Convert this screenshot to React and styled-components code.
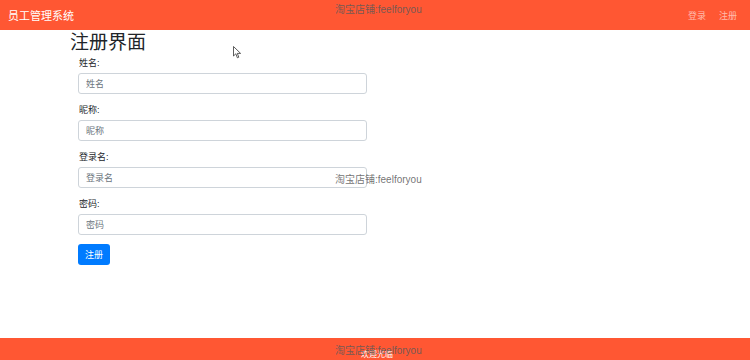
import React from "react";
import styled, { createGlobalStyle } from "styled-components";

const Global = createGlobalStyle`
  html, body { margin: 0; padding: 0; background: #fff; }
  body {
    font-family: "Liberation Sans", "Noto Sans CJK SC", sans-serif;
    color: #212529;
  }
`;

const Page = styled.div`
  position: relative;
  width: 750px;
  height: 360px;
  display: flex;
  flex-direction: column;
  overflow: hidden;
`;

const NavBar = styled.div`
  height: 30px;
  background: #ff5733;
  display: flex;
  align-items: center;
  justify-content: space-between;
  padding: 0 13px 0 8px;
  flex-shrink: 0;
`;

const Brand = styled.div`
  color: #fff;
  font-size: 11px;
`;

const NavLinks = styled.div`
  display: flex;
  gap: 13px;
`;

const NavLink = styled.a`
  color: rgba(255, 255, 255, 0.6);
  font-size: 9px;
`;

const Main = styled.div`
  flex: 1;
  padding: 1px 0 0 70px;
`;

const Title = styled.h2`
  font-size: 19px;
  font-weight: 400;
  margin: 1px 0 3px;
  line-height: 22px;
`;

const Form = styled.form`
  width: 289px;
  padding-left: 8px;
  display: flex;
  flex-direction: column;
`;

const Field = styled.div`
  display: flex;
  flex-direction: column;
  margin-bottom: 10px;
`;

const Label = styled.label`
  font-size: 9px;
  line-height: 12px;
  margin: 0 0 4px 1px;
`;

const Input = styled.input`
  box-sizing: border-box;
  height: 21px;
  border: 1px solid #ced4da;
  border-radius: 3px;
  padding: 0 7px;
  font-size: 9px;
  font-family: inherit;
  &::placeholder { color: #6c757d; }
`;

const Button = styled.button`
  align-self: flex-start;
  width: 32px;
  height: 21px;
  background: #007bff;
  border: none;
  border-radius: 3px;
  color: #fff;
  font-size: 9px;
  font-family: inherit;
  padding: 0;
  margin-top: -1px;
`;

const Footer = styled.div`
  height: 22px;
  background: #ff5733;
  display: flex;
  justify-content: center;
  align-items: flex-end;
  flex-shrink: 0;
`;

const FooterText = styled.div`
  color: #fff;
  font-size: 8px;
  line-height: 10px;
  margin-left: 4px;
`;

const Watermark = styled.div`
  position: absolute;
  left: ${(p) => p.x}px;
  top: ${(p) => p.y}px;
  font-size: 10px;
  color: rgba(90, 90, 90, 0.85);
  white-space: nowrap;
  pointer-events: none;
`;

const Cursor = styled.svg`
  position: absolute;
  left: 233px;
  top: 46px;
`;

export default function App() {
  const fields = [
    ["姓名", "text"],
    ["昵称", "text"],
    ["登录名", "text"],
    ["密码", "password"],
  ];
  return (
    <Page>
      <Global />
      <NavBar>
        <Brand>员工管理系统</Brand>
        <NavLinks>
          <NavLink>登录</NavLink>
          <NavLink>注册</NavLink>
        </NavLinks>
      </NavBar>
      <Main>
        <Title>注册界面</Title>
        <Form>
          {fields.map(([name, type]) => (
            <Field key={name}>
              <Label>{name}:</Label>
              <Input type={type} placeholder={name} />
            </Field>
          ))}
          <Button type="button">注册</Button>
        </Form>
      </Main>
      <Footer>
        <FooterText>欢迎光临</FooterText>
      </Footer>
      <Watermark x={335} y={1}>淘宝店铺:feelforyou</Watermark>
      <Watermark x={335} y={171}>淘宝店铺:feelforyou</Watermark>
      <Watermark x={335} y={342}>淘宝店铺:feelforyou</Watermark>
      <Cursor width="9" height="13" viewBox="0 0 9 13">
        <path d="M0.5 0.5 L0.5 10 L2.8 7.8 L4.4 11.8 L5.8 11.2 L4.3 7.4 L7.6 7.4 Z" fill="#fff" stroke="#333" strokeWidth="0.8" />
      </Cursor>
    </Page>
  );
}
